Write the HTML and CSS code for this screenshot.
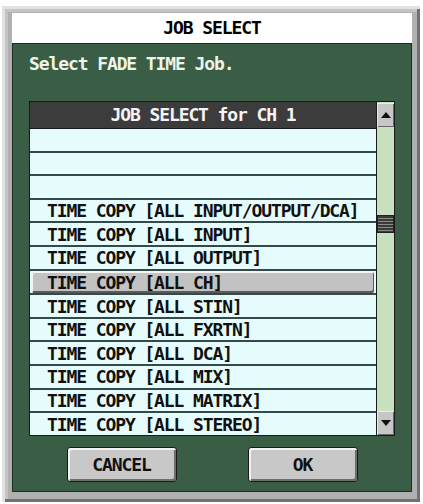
FILE: index.html
```html
<!DOCTYPE html>
<html lang="en">
<head>
  <meta charset="UTF-8">
  <meta name="viewport" content="width=device-width, initial-scale=1.0">
  <title>Job Select</title>
  <link rel="stylesheet" href="styles.css">
</head>
<body>
  <div class="window">
    <div class="title">JOB SELECT</div>
    <div class="panel">
      <p class="msg">Select FADE TIME Job.</p>

      <div class="picker">
        <div class="list">
          <div class="list-head">JOB SELECT for CH 1</div>
          <ul class="rows">
            <li></li>
            <li></li>
            <li></li>
            <li>TIME COPY [ALL INPUT/OUTPUT/DCA]</li>
            <li>TIME COPY [ALL INPUT]</li>
            <li>TIME COPY [ALL OUTPUT]</li>
            <li class="selected">TIME COPY [ALL CH]</li>
            <li>TIME COPY [ALL STIN]</li>
            <li>TIME COPY [ALL FXRTN]</li>
            <li>TIME COPY [ALL DCA]</li>
            <li>TIME COPY [ALL MIX]</li>
            <li>TIME COPY [ALL MATRIX]</li>
            <li>TIME COPY [ALL STEREO]</li>
          </ul>
        </div>
        <div class="scroll">
          <div class="scroll-btn up"></div>
          <div class="track"><div class="thumb"></div></div>
          <div class="scroll-btn down"></div>
        </div>
      </div>

      <div class="actions">
        <button type="button">CANCEL</button>
        <button type="button">OK</button>
      </div>
    </div>
  </div>
</body>
</html>
```

FILE: styles.css
```css
body {
  margin: 0;
  background: #fff;
  font-family: "DejaVu Sans Mono", "Liberation Mono", monospace;
  font-weight: bold;
  font-size: 18px;
  letter-spacing: -1.1px;
}

.window {
  box-sizing: border-box;
  width: 418px;
  height: 496px;
  margin: 6px 3px 2px 2px;
  padding: 7px 8px 10px 10px;
  background: #b0b0b0;
  box-shadow: inset 3px 3px 0 #e2e2e2, inset -3px -3px 0 #727272, inset 6px 6px 0 #c4c4c4;
  display: flex;
  flex-direction: column;
}

.title {
  height: 30px;
  line-height: 30px;
  background: #fff;
  color: #000;
  text-align: center;
}

.panel {
  flex: 1;
  background: #3a5d45;
  border: 1px solid #1e2c22;
  padding: 0 16px;
}

.msg {
  margin: 10px 0 0;
  height: 20px;
  line-height: 20px;
  color: #eef4e8;
}

.picker {
  display: flex;
  height: 335px;
  margin-top: 27px;
}

.list {
  flex: 1;
  display: flex;
  flex-direction: column;
  border: 1px solid #1a1a1a;
  border-right: none;
}

.list-head {
  height: 26px;
  line-height: 26px;
  background: #3c3c3c;
  color: #f4f4f4;
  text-align: center;
  border-bottom: 1px solid #1a1a1a;
}

.rows {
  flex: 1;
  display: flex;
  flex-direction: column;
  list-style: none;
  margin: 0;
  padding: 0;
  background: #e6fcfc;
}

.rows li {
  flex: 1;
  display: flex;
  align-items: center;
  padding-left: 17px;
  color: #111;
  border-bottom: 2px solid #33494a;
}

.rows li:last-child {
  border-bottom: none;
}

.rows li.selected {
  margin: 1px 2px 0;
  padding-left: 15px;
  background: #c2c2c2;
  border-radius: 2px;
  border-bottom: none;
  box-shadow: inset 1px 1px 0 #f4f4f4, inset -1px -2px 0 #5a5a5a;
}

.rows li.selected + li {
  border-top: 2px solid #33494a;
}

.scroll {
  width: 17px;
  display: flex;
  flex-direction: column;
  border: 1px solid #1a1a1a;
  background: #c8e2c0;
}

.scroll-btn {
  height: 24px;
  background: #c6c6c6;
  box-shadow: inset 1px 1px 0 #ececec, inset -1px -1px 0 #6a6a6a;
  display: flex;
  align-items: center;
  justify-content: center;
}

.scroll-btn.up {
  margin-top: 1px;
}

.scroll-btn::after {
  content: "";
  border-left: 5px solid transparent;
  border-right: 5px solid transparent;
}

.scroll-btn.up::after {
  border-bottom: 6px solid #111;
}

.scroll-btn.down::after {
  border-top: 6px solid #111;
}

.track {
  flex: 1;
}

.thumb {
  height: 18px;
  margin-top: 88px;
  background: repeating-linear-gradient(to bottom, #3a3a3a 0 2px, #8a8a8a 2px 3px);
  border: 1px solid #222;
  box-sizing: border-box;
}

.actions {
  display: flex;
  justify-content: center;
  gap: 71px;
  margin-top: 11px;
}

.actions button {
  width: 110px;
  height: 35px;
  padding: 0;
  font: inherit;
  letter-spacing: -1.1px;
  color: #111;
  background: #c8c8c8;
  border: 1px solid #1a1a1a;
  border-radius: 3px;
  box-shadow: inset 2px 2px 0 #f2f2f2, inset -2px -2px 0 #6e6e6e;
}
```
